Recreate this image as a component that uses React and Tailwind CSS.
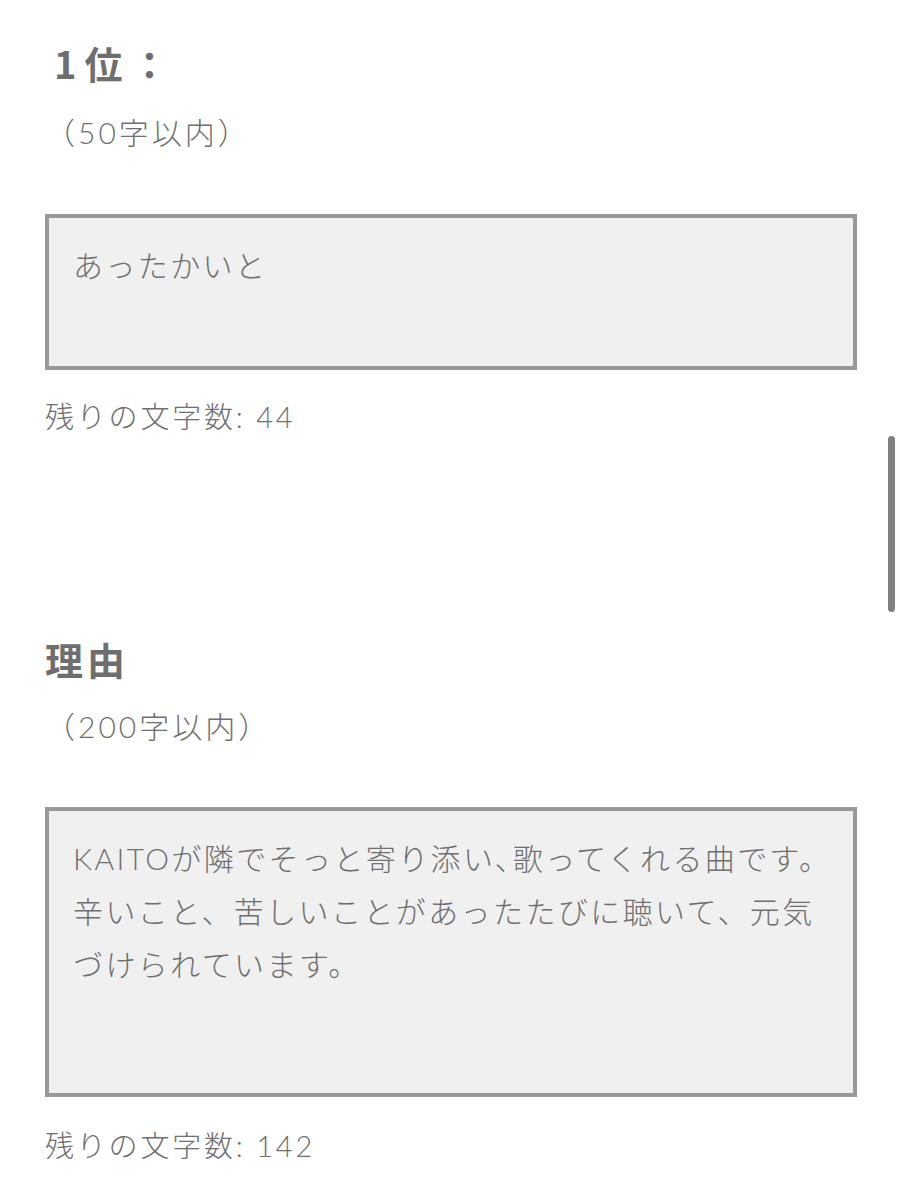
export default function App() {
    return (
        <div className="relative min-h-[1200px] bg-white pl-[45px] pr-[45px] pt-[42px] font-light text-[#6f6f6f] [font-family:Lato,'Noto_Sans_CJK_JP',sans-serif]">
            {/* 1位 */}
            <h2 className="pl-[9px] text-[38px] font-bold leading-[42px] tracking-[8px] text-[#6e6e6e] [font-family:'Noto_Sans_CJK_JP',sans-serif]">1位：</h2>
            <p className="mt-[28px] text-[30px] leading-[40px] tracking-[3px]">（50字以内）</p>

            <div className="mt-[62px] h-[156px] border-4 border-[#999] bg-[#f0f0f0] px-[24px] pt-[20px]">
                <p className="text-[30px] leading-[54px] tracking-[2.4px]">あったかいと</p>
            </div>
            <p className="mt-[27px] text-[29px] leading-[40px] tracking-[2.8px]">残りの文字数: 44</p>

            {/* 理由 */}
            <h2 className="mt-[201px] text-[38px] font-bold leading-[42px] tracking-[4px] text-[#6e6e6e] [font-family:'Noto_Sans_CJK_JP',sans-serif]">理由</h2>
            <p className="mt-[26px] text-[30px] leading-[40px] tracking-[3px]">（200字以内）</p>

            <div className="mt-[61px] h-[290px] border-4 border-[#999] bg-[#f0f0f0] px-[24px] pt-[21px]">
                <p className="whitespace-nowrap text-[30px] leading-[53px] tracking-[2.4px]">KAITOが隣でそっと寄り添い､歌ってくれる曲です。</p>
                <p className="whitespace-nowrap text-[30px] leading-[53px] tracking-[2.4px]">辛いこと、苦しいことがあったたびに聴いて、元気</p>
                <p className="whitespace-nowrap text-[30px] leading-[53px] tracking-[2.4px]">づけられています。</p>
            </div>
            <p className="mt-[29px] text-[29px] leading-[40px] tracking-[2.8px]">残りの文字数: 142</p>

            {/* scrollbar thumb */}
            <div className="absolute left-[888px] top-[436px] h-[176px] w-[7px] rounded-full bg-[#808080]" />
        </div>
    );
}
